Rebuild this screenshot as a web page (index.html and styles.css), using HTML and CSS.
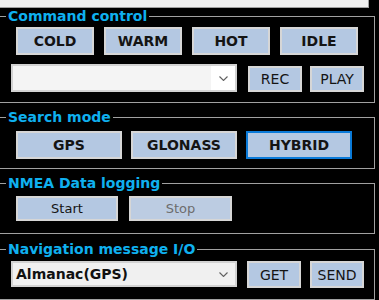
FILE: index.html
```html
<!DOCTYPE html>
<html>
<head>
<meta charset="utf-8">
<link rel="stylesheet" href="styles.css">
</head>
<body>
<div class="top"></div>

<fieldset class="group g1">
  <legend>Command control</legend>
  <div class="row row-cmd">
    <button class="btn bold w78">COLD</button>
    <button class="btn bold w78">WARM</button>
    <button class="btn bold w78">HOT</button>
    <button class="btn bold w78">IDLE</button>
  </div>
  <div class="row row-combo row-end">
    <div class="combo combo-light">
      <span class="combo-text"></span>
      <span class="combo-arrow"><svg width="9" height="5" viewBox="0 0 9 5"><polyline points="0.5,0.5 4.5,4.5 8.5,0.5" fill="none" stroke="#606060" stroke-width="1.1"/></svg></span>
    </div>
    <button class="btn small rec">REC</button>
    <button class="btn small play">PLAY</button>
  </div>
</fieldset>

<fieldset class="group g2">
  <legend>Search mode</legend>
  <div class="row row-search">
    <button class="btn bold w106">GPS</button>
    <button class="btn bold w106">GLONASS</button>
    <button class="btn bold w106 selected">HYBRID</button>
  </div>
</fieldset>

<fieldset class="group g3">
  <legend>NMEA Data logging</legend>
  <div class="row row-log">
    <button class="btn log start">Start</button>
    <button class="btn log stop" disabled>Stop</button>
  </div>
</fieldset>

<fieldset class="group g4">
  <legend>Navigation message I/O</legend>
  <div class="row row-combo row-nav">
    <div class="combo combo-gray">
      <span class="combo-text">Almanac(GPS)</span>
      <span class="combo-arrow"><svg width="9" height="5" viewBox="0 0 9 5"><polyline points="0.5,0.5 4.5,4.5 8.5,0.5" fill="none" stroke="#606060" stroke-width="1.1"/></svg></span>
    </div>
    <button class="btn small get">GET</button>
    <button class="btn small send">SEND</button>
  </div>
</fieldset>
</body>
</html>
```

FILE: styles.css
```css
* { box-sizing: border-box; }

html, body {
  margin: 0;
  padding: 0;
  background: #000;
  width: 379px;
  height: 300px;
  overflow: hidden;
  font-family: "DejaVu Sans", "Liberation Sans", sans-serif;
}

.top {
  width: 369px;
  height: 8px;
  background: #f0f0f0;
  border-right: 1px solid #a0a0a0;
  border-bottom: 1px solid #a0a0a0;
}

.group {
  margin: 0 0 0 -3px;
  width: 378px;
  min-width: 0;
  border: 1px solid #a0a0a0;
  padding: 0 0 0 8px;
}

.group legend {
  margin: 0;
  padding: 0 2px;
  font-weight: bold;
  font-size: 14px;
  line-height: 16px;
  height: 16px;
  color: #0fb0ef;
}

.g1 { margin-top: 0; padding-top: 3px; padding-bottom: 10px; }
.g2 { margin-top: 6px; padding-top: 6px; padding-bottom: 9px; }
.g3 { margin-top: 6px; padding-top: 5px; padding-bottom: 12px; }
.g4 { margin-top: 7px; padding-top: 4px; padding-bottom: 11px; }

.row { display: flex; }
.row-end { align-items: flex-end; }

.row-cmd { margin-left: 10px; gap: 10px; height: 28px; margin-bottom: 9px; }
.row-combo { margin-left: 5px; height: 28px; }
.row-search { margin-left: 10px; gap: 9px; height: 28px; }
.row-log { margin-left: 10px; gap: 11px; height: 25px; }
.row-nav { height: 27px; align-items: flex-start; }

.btn {
  margin: 0;
  padding: 0;
  border: 2px solid #d6d6d6;
  background: #b4c8e2;
  color: #141414;
  font-family: "DejaVu Sans", "Liberation Sans", sans-serif;
  font-size: 14px;
  line-height: 1;
  height: 100%;
  display: flex;
  align-items: center;
  justify-content: center;
}

.bold { font-weight: bold; }
.w78 { width: 78px; }
.w106 { width: 106px; }

.selected { border-color: #0a7ad8; }

.small { width: 54px; height: 26px; font-weight: normal; }
.rec { margin-left: 11px; }
.play { margin-left: 8px; }
.get { margin-left: 10px; height: 27px; }
.send { margin-left: 9px; height: 27px; }

.log { width: 102px; font-size: 13px; }
.stop { width: 103px; color: #6d6d6d; background: #bccce2; }

.combo {
  width: 226px;
  height: 28px;
  display: flex;
  border: 2px solid #d2d2d2;
}
.combo-gray { height: 26px; }

.combo-text {
  flex: 1;
  display: flex;
  align-items: center;
  padding-left: 3px;
  font-weight: bold;
  font-size: 14px;
  color: #111;
}

.combo-arrow {
  width: 24px;
  display: flex;
  align-items: center;
  justify-content: center;
}

.combo-light .combo-text { background: #f4f4f4; }
.combo-light .combo-arrow { background: #fff; }
.combo-gray .combo-text,
.combo-gray .combo-arrow { background: #f0f0f0; }
```
